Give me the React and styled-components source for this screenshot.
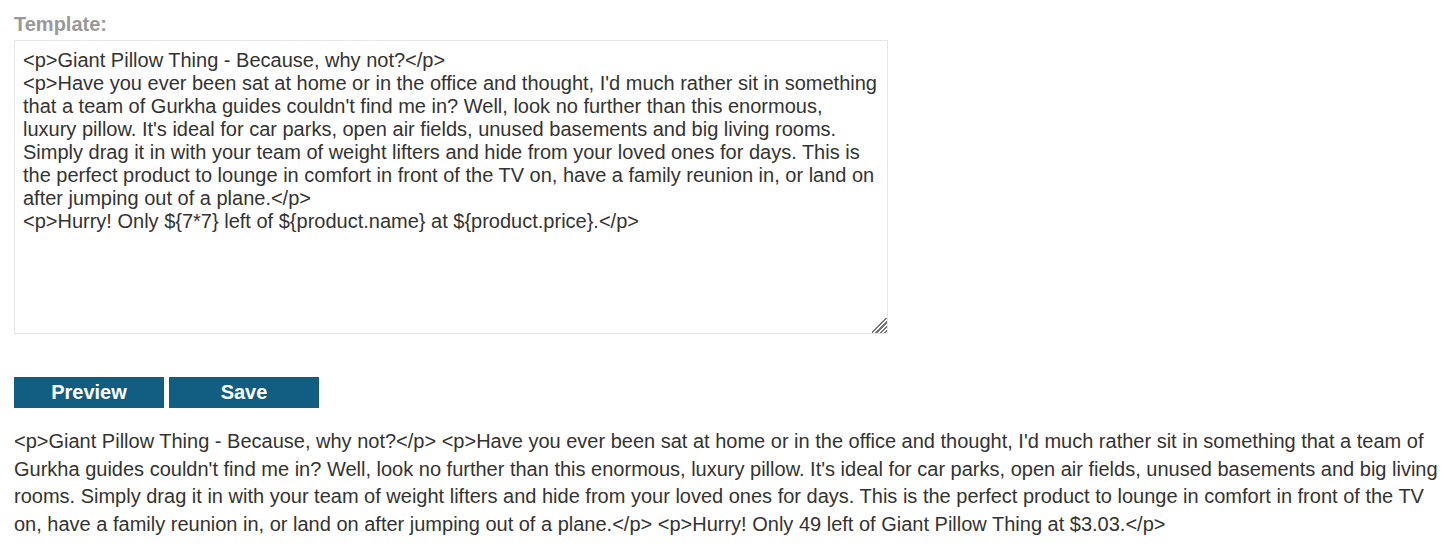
import styled, { createGlobalStyle } from "styled-components";

const Global = createGlobalStyle`
  html, body { margin: 0; padding: 0; background: #fff; }
  body { font-family: "Liberation Sans", Arial, sans-serif; color: #333332; }
`;

const Page = styled.div`
  padding: 12px 14px 0 14px;
`;

const Label = styled.label`
  display: block;
  font-size: 20px;
  font-weight: bold;
  color: #999;
  line-height: 24px;
  margin-bottom: 4px;
`;

const Editor = styled.textarea`
  display: block;
  box-sizing: border-box;
  width: 874px;
  height: 294px;
  margin: 0;
  padding: 8px 8px;
  border: 1px solid #e6e6e6;
  font-family: "Liberation Sans", Arial, sans-serif;
  font-size: 20px;
  line-height: 23px;
  color: #333332;
  resize: both;
  outline: none;

  &::-webkit-resizer {
    background: linear-gradient(
      135deg,
      transparent 0 45%,
      #777 45% 52%,
      transparent 52% 60%,
      #777 60% 67%,
      transparent 67% 75%,
      #777 75% 82%,
      transparent 82% 88%,
      #777 88% 95%,
      transparent 95%
    );
  }
`;

const Actions = styled.div`
  display: flex;
  gap: 5px;
  margin-top: 43px;
`;

const Button = styled.button`
  width: 150px;
  height: 31px;
  border: 0;
  padding: 0;
  background: #125e82;
  color: #fff;
  font-family: "Liberation Sans", Arial, sans-serif;
  font-size: 20px;
  font-weight: bold;
  cursor: pointer;
`;

const Rendered = styled.p`
  margin: 20px 0 0 0;
  font-size: 20px;
  line-height: 27.5px;
  color: #333332;
`;

const template = `<p>Giant Pillow Thing - Because, why not?</p>
<p>Have you ever been sat at home or in the office and thought, I'd much rather sit in something that a team of Gurkha guides couldn't find me in? Well, look no further than this enormous, luxury pillow. It's ideal for car parks, open air fields, unused basements and big living rooms. Simply drag it in with your team of weight lifters and hide from your loved ones for days. This is the perfect product to lounge in comfort in front of the TV on, have a family reunion in, or land on after jumping out of a plane.</p>
<p>Hurry! Only \${7*7} left of \${product.name} at \${product.price}.</p>`;

const output = `<p>Giant Pillow Thing - Because, why not?</p> <p>Have you ever been sat at home or in the office and thought, I'd much rather sit in something that a team of Gurkha guides couldn't find me in? Well, look no further than this enormous, luxury pillow. It's ideal for car parks, open air fields, unused basements and big living rooms. Simply drag it in with your team of weight lifters and hide from your loved ones for days. This is the perfect product to lounge in comfort in front of the TV on, have a family reunion in, or land on after jumping out of a plane.</p> <p>Hurry! Only 49 left of Giant Pillow Thing at $3.03.</p>`;

export default function App() {
  return (
    <>
      <Global />
      <Page>
        <Label htmlFor="template">Template:</Label>
        <Editor id="template" defaultValue={template} spellCheck={false} />
        <Actions>
          <Button type="button">Preview</Button>
          <Button type="button">Save</Button>
        </Actions>
        <Rendered>{output}</Rendered>
      </Page>
    </>
  );
}
